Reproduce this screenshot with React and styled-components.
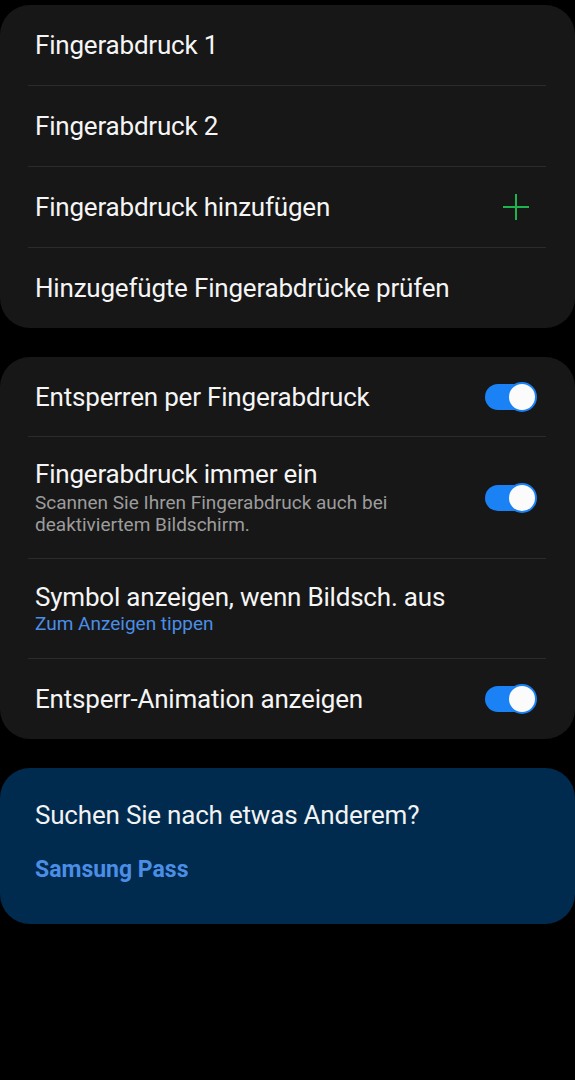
import React, { useState } from "react";
import styled, { createGlobalStyle } from "styled-components";

const Global = createGlobalStyle`
  html, body {
    margin: 0;
    padding: 0;
    background: #000;
  }
  body {
    font-family: Roboto, "Noto Sans", "Liberation Sans", sans-serif;
    -webkit-font-smoothing: antialiased;
  }
`;

const Page = styled.div`
  width: 575px;
  min-height: 1080px;
  background: #000;
  padding-top: 5px;
  box-sizing: border-box;
  display: flex;
  flex-direction: column;
  gap: 29px;
`;

const Card = styled.div`
  background: ${p => p.$bg || "#171717"};
  border-radius: 30px;
  display: flex;
  flex-direction: column;
`;

const Row = styled.div`
  margin: 0 29px 0 28px;
  padding: 0 9px 0 7px;
  min-height: ${p => p.$h}px;
  display: flex;
  align-items: center;
  justify-content: space-between;
  gap: 16px;
  box-sizing: border-box;
  border-bottom: ${p => (p.$last ? "none" : "1px solid #2b2b2b")};
`;

const TextBlock = styled.div`
  display: flex;
  flex-direction: column;
  flex: 1;
`;

const Title = styled.div`
  color: #f5f5f5;
  font-size: 26px;
  line-height: 30px;
  letter-spacing: -0.2px;
`;

const Sub = styled.div`
  color: ${p => (p.$link ? "#4b8ee6" : "#9c9c9c")};
  font-size: 19px;
  line-height: 22px;
  margin-top: ${p => (p.$link ? 1 : 3)}px;
  max-width: 390px;
`;

const Track = styled.button`
  position: relative;
  width: 52px;
  height: 30px;
  padding: 0;
  border: none;
  background: transparent;
  flex-shrink: 0;
  cursor: pointer;
  &::before {
    content: "";
    position: absolute;
    left: 0;
    top: 2px;
    width: 48px;
    height: 26px;
    border-radius: 13px;
    background: ${p => (p.$on ? "#1a82f5" : "#555")};
  }
`;

const Thumb = styled.span`
  position: absolute;
  top: 0;
  left: ${p => (p.$on ? "22px" : "0")};
  width: 26px;
  height: 26px;
  border-radius: 50%;
  background: #fbfbfb;
  border: 2px solid ${p => (p.$on ? "#1a82f5" : "#555")};
`;

const PlusIcon = styled.svg`
  flex-shrink: 0;
  margin-right: 7px;
`;

const Promo = styled.div`
  padding: 32px 35px 40px;
  display: flex;
  flex-direction: column;
  gap: 26px;
`;

const PromoTitle = styled.div`
  color: #f2f2f2;
  font-size: 26px;
  line-height: 30px;
  letter-spacing: -0.2px;
`;

const PromoLink = styled.div`
  color: #4b8ee6;
  font-size: 23px;
  font-weight: 700;
  line-height: 28px;
`;

function Toggle({ initial = true }) {
  const [on, setOn] = useState(initial);
  return (
    <Track $on={on} onClick={() => setOn(!on)}>
      <Thumb $on={on} />
    </Track>
  );
}

function Plus() {
  return (
    <PlusIcon width="28" height="28" viewBox="0 0 28 28">
      <path d="M14 1v26M1 14h26" stroke="#1fb34e" strokeWidth="2" />
    </PlusIcon>
  );
}

export default function App() {
  return (
    <>
      <Global />
      <Page>
        <Card>
          <Row $h={81}><Title>Fingerabdruck 1</Title></Row>
          <Row $h={81}><Title>Fingerabdruck 2</Title></Row>
          <Row $h={81}>
            <Title>Fingerabdruck hinzufügen</Title>
            <Plus />
          </Row>
          <Row $h={80} $last><Title>Hinzugefügte Fingerabdrücke prüfen</Title></Row>
        </Card>

        <Card>
          <Row $h={80}>
            <Title>Entsperren per Fingerabdruck</Title>
            <Toggle />
          </Row>
          <Row $h={122}>
            <TextBlock>
              <Title>Fingerabdruck immer ein</Title>
              <Sub>Scannen Sie Ihren Fingerabdruck auch bei deaktiviertem Bildschirm.</Sub>
            </TextBlock>
            <Toggle />
          </Row>
          <Row $h={100}>
            <TextBlock>
              <Title>Symbol anzeigen, wenn Bildsch. aus</Title>
              <Sub $link>Zum Anzeigen tippen</Sub>
            </TextBlock>
          </Row>
          <Row $h={80} $last>
            <Title>Entsperr-Animation anzeigen</Title>
            <Toggle />
          </Row>
        </Card>

        <Card $bg="#002a4e">
          <Promo>
            <PromoTitle>Suchen Sie nach etwas Anderem?</PromoTitle>
            <PromoLink>Samsung Pass</PromoLink>
          </Promo>
        </Card>
      </Page>
    </>
  );
}
